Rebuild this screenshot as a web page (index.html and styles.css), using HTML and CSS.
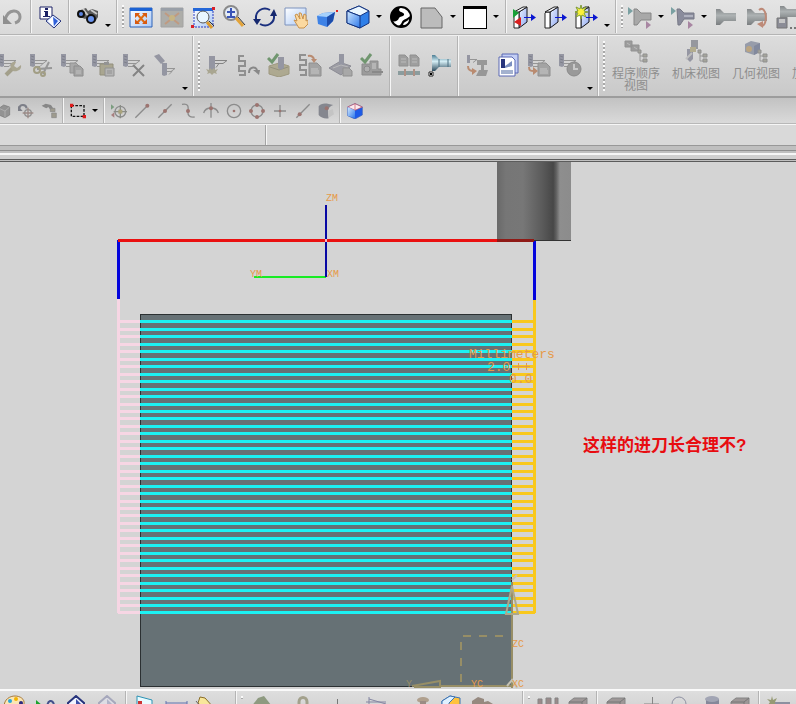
FILE: index.html
```html
<!DOCTYPE html>
<html lang="zh-CN">
<head>
<meta charset="UTF-8">
<meta name="viewport" content="width=device-width, initial-scale=1.0">
<title>刀轨</title>
<link rel="stylesheet" href="styles.css">
</head>
<body>

<!-- 公用图形 -->
<svg class="defs" aria-hidden="true">
  <defs>
    <linearGradient id="blue" x1="0" y1="0" x2="1" y2="1"><stop offset="0" stop-color="#d4eaff"/><stop offset="1" stop-color="#2c78ea"/></linearGradient>
    <linearGradient id="win" x1="0" y1="0" x2="1" y2="1"><stop offset="0" stop-color="#ffffff"/><stop offset="1" stop-color="#a9c8f7"/></linearGradient>
    <linearGradient id="slab" x1="0" y1="0" x2="1" y2="1"><stop offset="0" stop-color="#eef4ff"/><stop offset="1" stop-color="#8fa8f0"/></linearGradient>
    <linearGradient id="steel" x1="0" y1="0" x2="0" y2="1"><stop offset="0" stop-color="#4d7e94"/><stop offset=".4" stop-color="#d5eef5"/><stop offset="1" stop-color="#2e4c5e"/></linearGradient>
    <linearGradient id="grey" x1="0" y1="0" x2="0" y2="1"><stop offset="0" stop-color="#85898b"/><stop offset=".4" stop-color="#adb2b3"/><stop offset="1" stop-color="#7a7e80"/></linearGradient>
    <linearGradient id="tool" x1="0" y1="0" x2="1" y2="0">
      <stop offset="0" stop-color="#696969"/><stop offset=".12" stop-color="#767676"/><stop offset=".35" stop-color="#777777"/>
      <stop offset=".6" stop-color="#5c5c5c"/><stop offset=".76" stop-color="#474747"/><stop offset=".8" stop-color="#606060"/>
      <stop offset=".85" stop-color="#8e8e8e"/><stop offset="1" stop-color="#8c8c8c"/>
    </linearGradient>
    <symbol id="cutter" viewBox="0 0 24 24">
      <path d="M1 1h5v12l-2 1-3-1z" fill="#8a8c9a"/><path d="M2 3l3 1M2 6l3 1M2 9l3 1" stroke="#70727f"/>
      <path d="M6 7.500h12l-4 3M6 10.500h8l-3 3H6" fill="none" stroke="#8b8b8b"/>
    </symbol>
    <symbol id="page" viewBox="0 0 24 24">
      <path d="M11 10h8l4 4v9H11z" fill="#9b9b9b" stroke="#848484"/><path d="M13 16h7M13 18h8M13 20h8" stroke="#c6c6c6"/>
    </symbol>
    <symbol id="tree" viewBox="0 0 24 24">
      <path d="M16 14v8M16 17h3M16 22h3" stroke="#8d8d8d" fill="none"/><path d="M14 11h3v3h-3zM19 15h4v3h-4zM19 20h4v3h-4z" fill="#9d9d92" stroke="#858585"/>
    </symbol>
    <symbol id="holder" viewBox="0 0 24 24">
      <path d="M2 4h4l4 4h12v8H10l-4 4H2z" fill="url(#grey)"/>
    </symbol>
    <symbol id="door" viewBox="0 0 24 24">
      <path d="M6 7l8-5v15l-8 6z" fill="url(#slab)" stroke="#101018"/><path d="M1 8l1-1h4v16H1z" fill="#fff" stroke="#222"/><path d="M1 7l9-5h4L6 7z" fill="#f6f6fa" stroke="#222"/>
      <path d="M11 12h7V9l5 3.500-5 3.500v-3h-7z" fill="#0a16d0"/>
    </symbol>
    <symbol id="gcube" viewBox="0 0 24 24">
      <path d="M3 7l5-4h13v12l-5 5H3z" fill="#9d9797" stroke="#858585"/><path d="M3 7h13v13M16 7l5-4" fill="none" stroke="#777"/>
    </symbol>
  </defs>
</svg>

<header class="bars">

  <!-- 标准 / 视图 / 机床 -->
  <div class="toolbar toolbar-view" role="toolbar">
    <button class="btn" aria-label="撤消"><svg viewBox="0 0 24 24"><path d="M5 15C8 3 20 4 20 12c0 3-2 5-5 6" fill="none" stroke="#959595" stroke-width="3"/><path d="M3 10v9h9z" fill="#8f8f8f"/></svg></button>
    <span class="sep"></span>
    <button class="btn" aria-label="信息"><svg viewBox="0 0 24 24"><path d="M2 2h12v12H2z" fill="#fff" stroke="#1c2266"/><path d="M7 3h3v2H7zM6 6h4v5h2v1H5v-1h2V7H6z" fill="#1c2266"/><path d="M15 10l8 6-7 7-8-7z" fill="#dbe7ff" stroke="#27347c"/><path d="M15 12v9l-5-5z" fill="#fff"/><path d="M15 12l5 4-4 5z" fill="#2f5fd8"/></svg></button>
    <span class="sep"></span>
    <button class="btn" aria-label="查找"><svg viewBox="0 0 24 24"><path d="M2 6l8-3 2 3 4-2 6 2v6l-3 5-5 1-3-5-2 1-5-2z" fill="#5a5a5a"/><path d="M7 4l6 8M15 5l6 4" stroke="#c9c9c9" stroke-width="2"/><circle cx="5" cy="9" r="4" fill="#101010"/><circle cx="5" cy="9" r="2" fill="#5b84e0"/><circle cx="15" cy="14" r="5" fill="#101010"/><circle cx="15" cy="14" r="3" fill="#6b95ee"/></svg></button>
    <button class="drop more" aria-label="更多"></button>
    <span class="sep"></span>
    <span class="grip"></span>
    <button class="btn" aria-label="适合窗口"><svg viewBox="0 0 24 24"><path d="M1 3h22v19H1z" fill="url(#win)" stroke="#2c62b8"/><path d="M1 3h22v3H1z" fill="#1c62d4"/><path d="M8 9l8 9M16 9l-8 9" stroke="#e06a10" stroke-width="2"/><path d="M6 8h5l-5 5zM18 8h-5l5 5zM6 19h5l-5-5zM18 19h-5l5-5z" fill="#d85a12"/></svg></button>
    <button class="btn" aria-label="填充视图"><svg viewBox="0 0 24 24"><path d="M1 3h22v19H1z" fill="#adada9" stroke="#a2a2a2"/><path d="M1 3h22v3H1z" fill="#9aa0a8"/><path d="M5 8l5 4M19 8l-5 4M5 19l5-4M19 19l-5-4" stroke="#c09a80" stroke-width="2"/><circle cx="12" cy="13" r="3" fill="#c7b584"/></svg></button>
    <button class="btn" aria-label="缩放"><svg viewBox="0 0 24 24"><path d="M2 3h20v19H2z" fill="url(#win)"/><path d="M2 3h20v3H2z" fill="#2467d8"/><path d="M3 6v16M4 22h18M22 6v16" stroke="#283ac0" stroke-dasharray="2 1"/><circle cx="12" cy="12" r="6" fill="#e9f6ff" stroke="#555"/><path d="M16 17l5 6" stroke="#dd9b2c" stroke-width="3"/><path d="M18 16l5 5" stroke="#333"/><path d="M0 20h3v3H0zM21 2h3v3h-3z" fill="#d8202a"/></svg></button>
    <button class="btn" aria-label="放大缩小"><svg viewBox="0 0 24 24"><circle cx="9" cy="8" r="7" fill="#e4ecf6" stroke="#8a8a8a" stroke-width="2"/><path d="M5 7h8M9 3v8M5 12h8" stroke="#3a55b8" stroke-width="2"/><path d="M14 13l7 8" stroke="#e2a33a" stroke-width="3"/><path d="M16 12l7 8" stroke="#333"/></svg></button>
    <button class="btn" aria-label="旋转"><svg viewBox="0 0 24 24"><path d="M3 14C2 6 10 1 17 5M21 10c1 8-7 13-14 9" fill="none" stroke="#1a2f7e" stroke-width="2"/><path d="M17 11l4-7 3 7zM0 14l4 6 4-6z" fill="#16286e"/></svg></button>
    <button class="btn" aria-label="平移"><svg viewBox="0 0 24 24"><path d="M1 3h21v17H1z" fill="url(#win)" stroke="#7d92bc"/><path d="M10 15l3 1-2-6 2-1 3 5-1-6h2l2 6 1-5 2 1v6l2-1v4l-4 4h-5z" fill="#fbd9a0" stroke="#c9924c"/></svg></button>
    <button class="btn" aria-label="透视"><svg viewBox="0 0 24 24"><path d="M2 11l6-3 12-1-2 9-6 6-9-3z" fill="#3e82e6"/><path d="M2 11l6-3 12-1-8 5z" fill="#a5d0fb"/><path d="M12 12l8-5-2 9-6 6z" fill="#1c4cab"/><path d="M21 5h2v2h-2z" fill="#d22"/></svg></button>
    <button class="btn" aria-label="带边着色"><svg viewBox="0 0 24 24"><path d="M1 6l12-5 10 5v12l-9 5-13-5z" fill="#2f7fe8" stroke="#12327e"/><path d="M1 6l12-5 10 5-9 5z" fill="#eaf6ff" stroke="#12327e"/><path d="M1 6l13 5v12L1 18z" fill="url(#blue)" stroke="#12327e"/></svg></button>
    <button class="drop" aria-label="着色选项"></button>
    <button class="btn" aria-label="面分析"><svg viewBox="0 0 24 24"><circle cx="12" cy="12" r="10" fill="#fff" stroke="#000" stroke-width="2"/><path d="M13 2C5 1 0 9 3 16c3 1 6 0 7-3 1-2 4-1 5-3 1-3-4-2-5-5 0-2 2-3 3-3z" fill="#000"/><path d="M8 21c3 0 4-2 5-4 1-3 6-3 9-7 1 7-4 13-9 12z" fill="#000"/><path d="M14 20c1-4 4-3 6-6 0 4-3 6-6 6z" fill="#fff"/></svg></button>
    <button class="btn" aria-label="剖切"><svg viewBox="0 0 24 24"><path d="M1 3h14l7 9v11H1z" fill="#bcbcbc" stroke="#666"/></svg></button>
    <button class="drop" aria-label="剖切选项"></button>
    <button class="btn" aria-label="背景色"><svg viewBox="0 0 24 24"><path d="M0 1h24v23H0z" fill="#000"/><path d="M1 4h22v19H1z" fill="#fff"/></svg></button>
    <button class="drop" aria-label="背景色选项"></button>
    <span class="sep"></span>
    <button class="btn" aria-label="显示隐藏"><svg viewBox="0 0 24 24"><use href="#door"/><path d="M0 4l6 4-6 5z" fill="#18a038"/><path d="M8 12v9l-7-4z" fill="#d81f1f"/></svg></button>
    <button class="btn" aria-label="隐藏"><svg viewBox="0 0 24 24"><use href="#door"/></svg></button>
    <button class="btn" aria-label="新建显示"><svg viewBox="0 0 24 24"><use href="#door"/><path d="M6 0l1 4 4-2-2 4 4 1-4 1 2 4-4-2-1 4-1-4-4 2 2-4-4-1 4-1-2-4 4 2z" fill="#fbf23a" stroke="#7d9a3a"/></svg></button>
    <button class="drop more" aria-label="更多"></button>
    <span class="sep"></span>
    <span class="grip"></span>
    <button class="btn" aria-label="创建刀具"><svg viewBox="0 0 24 24"><path d="M0 2l5 4-5 4z" fill="#7aa0a2"/><path d="M6 4h3l4 4h10v7H13l-4 5H6z" fill="#a8a8a8" stroke="#868686"/><path d="M18 16l5 4-5 4z" fill="#a886a2"/></svg></button>
    <button class="drop" aria-label="刀具选项"></button>
    <button class="btn" aria-label="创建刀柄"><svg viewBox="0 0 24 24"><path d="M0 2l5 4-5 4z" fill="#7aa0a2"/><path d="M6 4h3l4 4h10v6H13l-4 6H7z" fill="#8a8c9c" stroke="#777986"/><path d="M13 11h9" stroke="#b0b2bf" stroke-width="2"/><path d="M17 16l5 4-5 4z" fill="#a886a2"/></svg></button>
    <button class="drop" aria-label="刀柄选项"></button>
    <button class="btn" aria-label="刀柄"><svg viewBox="0 0 24 24"><use href="#holder"/></svg></button>
    <button class="btn" aria-label="旋转刀柄"><svg viewBox="0 0 24 24"><use href="#holder"/><path d="M14 5c8-6 9 15 3 16" fill="none" stroke="#bd8a78" stroke-width="2"/><path d="M12 19l6-3v7z" fill="#bd8a78"/></svg></button>
    <button class="btn" aria-label="保存刀柄"><svg viewBox="0 0 24 24"><path d="M4 1h4l3 3h13v8H12l-3 3H4z" fill="url(#grey)"/><path d="M1 13h10v10H1z" fill="#8b8c96" stroke="#777"/><path d="M3 14h6v4H3z" fill="#c6c6c6"/><path d="M14 22h2v2h-2zM18 22h2v2h-2z" fill="#777"/></svg></button>
  </div>

  <!-- 操作 / 视图切换 -->
  <div class="toolbar toolbar-operation" role="toolbar">
    <button class="btn off" aria-label="编辑"><svg viewBox="0 0 24 24"><use href="#cutter"/><path d="M8 22l7-7" stroke="#9b977f" stroke-width="4"/><path d="M13 15c-2-5 3-7 5-6l-2 4 3 2 4-3c1 5-4 7-8 6z" fill="#a39f86"/></svg></button>
    <button class="btn off" aria-label="剪切"><svg viewBox="0 0 24 24"><use href="#cutter"/><path d="M20 9l-6 12M8 16l15-1" stroke="#8d8d8d" stroke-width="2"/><circle cx="8" cy="17" r="3" fill="none" stroke="#9a9678" stroke-width="2"/><circle cx="14" cy="21" r="2" fill="none" stroke="#9a9678" stroke-width="2"/></svg></button>
    <button class="btn off" aria-label="复制"><svg viewBox="0 0 24 24"><use href="#cutter"/><path d="M10 10h6l3 3v7h-9z" fill="#a2a2a2" stroke="#888"/><path d="M14 13h6l3 3v7h-9z" fill="#9d9d9d" stroke="#828282"/><path d="M16 18h5M16 20h5" stroke="#bdbdbd"/></svg></button>
    <button class="btn off" aria-label="粘贴"><svg viewBox="0 0 24 24"><use href="#cutter"/><path d="M9 11h13v11H9z" fill="#a39f86" stroke="#88856f"/><path d="M13 9h5v3h-5z" fill="#888"/><path d="M14 15h9v8h-9z" fill="#b0b0b0" stroke="#888"/><path d="M16 18h5M16 20h5" stroke="#888"/></svg></button>
    <button class="btn off" aria-label="删除"><svg viewBox="0 0 24 24"><use href="#cutter"/><path d="M11 12l11 11M22 12L11 23" stroke="#777" stroke-width="2"/></svg></button>
    <button class="btn off" aria-label="变换"><svg viewBox="0 0 24 24"><path d="M1 3l5-2 6 7-4 3z" fill="#8a8c9a"/><path d="M9 10h5v12l-3 1-2-1z" fill="#8a8c9a"/><path d="M14 15.500h8l-4 3M14 18.500h5l-3 3" fill="none" stroke="#8b8b8b"/></svg></button>
    <button class="drop more" aria-label="更多"></button>
    <span class="sep"></span>
    <span class="grip"></span>
    <button class="btn off" aria-label="生成刀轨"><svg viewBox="0 0 24 24"><path d="M4 3h6v14H4z" fill="#8a8c9a"/><path d="M10 7.500h12l-4 3h-8M18 10.500h-4l-3 4" fill="none" stroke="#777"/><path d="M1 16l3 1 1-2 2 2 2-2 1 2 3-1-2 3 1 2-3-1-2 2-2-2-3 1 1-2z" fill="#a39f86"/></svg></button>
    <button class="btn off" aria-label="重播刀轨"><svg viewBox="0 0 24 24"><path d="M8 3H3v5h6v5H3v5h6v4H3" fill="none" stroke="#858585" stroke-width="2"/><path d="M13 20c0-7 8-7 8-2" fill="none" stroke="#7c7c7c" stroke-width="2"/><path d="M17 17h7l-1 5z" fill="#7c7c7c"/></svg></button>
    <button class="btn off" aria-label="确认刀轨"><svg viewBox="0 0 24 24"><path d="M2 13l10-3 10 3v8l-10 3-10-3z" fill="#a8a386" stroke="#958f72"/><path d="M3 14l9 3 9-3" fill="none" stroke="#88856f"/><path d="M11 4h6v11l-3 2-3-2z" fill="#8a8c9a"/><path d="M1 5l4 4 6-8" fill="none" stroke="#5f8c5e" stroke-width="3"/></svg></button>
    <button class="btn off" aria-label="列出刀轨"><svg viewBox="0 0 24 24"><use href="#page"/><path d="M8 2H2v5h6v5H2v5h6v5H2" fill="none" stroke="#858585" stroke-width="2"/><path d="M10 3c4-1 6 2 6 4" fill="none" stroke="#b57f60" stroke-width="2"/><path d="M13 6h6l-3 4z" fill="#b57f60"/></svg></button>
    <button class="btn off" aria-label="后处理"><svg viewBox="0 0 24 24"><path d="M0 15l10-6 12 4-10 9z" fill="#93939c" stroke="#80808a"/><path d="M10 1h5v12h-5z" fill="#8a8c9a"/><path d="M4 15l8-3 7 2" stroke="#b5b5b5" fill="none"/><path d="M14 15h6l3 3v5h-9z" fill="#a2a2a2" stroke="#858585"/></svg></button>
    <button class="btn off" aria-label="机床仿真"><svg viewBox="0 0 24 24"><path d="M2 11h8V8h8v8h3v6H2z" fill="#939393" stroke="#818181"/><path d="M12 10h4v6h-4z" fill="#b0b0b0"/><circle cx="7" cy="16" r="3" fill="#aaa" stroke="#7d7d7d"/><path d="M12 19h11" stroke="#7d7d7d" stroke-width="2"/><path d="M1 5l4 4 6-8" fill="none" stroke="#5f8c5e" stroke-width="3"/></svg></button>
    <span class="sep"></span>
    <button class="btn off" aria-label="车间文档"><svg viewBox="0 0 24 24"><path d="M2 2h6l3 3v8H2zM13 2h6l3 3v8h-9z" fill="#959595" stroke="#858585"/><path d="M4 6h5M4 9h5M15 6h5M15 9h5" stroke="#b8b8b8"/><path d="M1 18h22v4H1z" fill="#7f9496"/><path d="M8 16v7M17 16v7" stroke="#a88678" stroke-width="2"/></svg></button>
    <button class="btn" aria-label="刀具"><svg viewBox="0 0 24 24"><path d="M4 2h3l4 4h12v8H11l-4 4H4z" fill="url(#steel)"/><path d="M11 6v8M20 6v8" stroke="#4a6e80"/><path d="M1 19h4v4H1z" fill="#fff" stroke="#222"/><path d="M2 20h2v2H2z" fill="#000"/></svg></button>
    <span class="sep"></span>
    <button class="btn off" aria-label="机床"><svg viewBox="0 0 24 24"><path d="M2 2h3v8H2z" fill="#8a8c9a"/><path d="M5 6.500h7l-4 3" fill="none" stroke="#8a8a8a"/><path d="M3 13c0 4 2 5 6 5" fill="none" stroke="#b57f60" stroke-width="2"/><path d="M7 15l5 3-5 4z" fill="#b57f60"/><path d="M12 7h10v5h-3v5h4l-2 6H11l3-6h2v-5h-4z" fill="#8e8e8e"/></svg></button>
    <button class="btn" aria-label="车间文档输出"><svg viewBox="0 0 24 24"><path d="M6 1h16v19H6z" fill="#c3cef4" stroke="#5a68b4"/><path d="M3 4h13l3 3v16H3z" fill="#fff" stroke="#5a68b4"/><path d="M5 6h4v9H5z" fill="#27347c"/><path d="M9 13l7-5v5l-7 2z" fill="#7b8fc0"/><path d="M5 18h12M5 20h12" stroke="#49659e"/></svg></button>
    <button class="btn off" aria-label="输出刀位"><svg viewBox="0 0 24 24"><use href="#cutter"/><use href="#page"/><path d="M2 14c0 4 2 4 5 4" fill="none" stroke="#b57f60" stroke-width="2"/><path d="M6 14l5 4-5 4z" fill="#b57f60"/></svg></button>
    <button class="btn off" aria-label="加工时间"><svg viewBox="0 0 24 24"><use href="#cutter"/><circle cx="16" cy="16" r="7" fill="#909090" stroke="#7e7e7e"/><path d="M16 11v5h4" fill="none" stroke="#c8c8c8" stroke-width="2"/></svg></button>
    <button class="drop more" aria-label="更多"></button>
    <span class="sep"></span>
    <span class="grip"></span>
    <button class="btn-label"><svg viewBox="0 0 24 24"><path d="M1 2h7v6H1zM7 6h8v6H7z" fill="#929292" stroke="#868686"/><path d="M3 4l3 2M10 8l3 2" stroke="#b5b5b5"/><use href="#tree"/></svg>程序顺序<br>视图</button>
    <button class="btn-label"><svg viewBox="0 0 24 24"><path d="M7 1h7v9H7z" fill="#8b8d94"/><path d="M3 10h6v10l-3 3-3-3z" fill="#8a8c9a"/><path d="M2 20l6-6" stroke="#bcbcbc" stroke-width="2"/><path d="M6 8h6v5H6z" fill="#ada684"/><use href="#tree"/></svg>机床视图</button>
    <button class="btn-label"><svg viewBox="0 0 24 24"><path d="M1 5l6-3 9 2v9l-6 3-9-3z" fill="#8c92a2"/><path d="M10 7l6-3v9l-6 3z" fill="#747c94"/><circle cx="5" cy="10" r="3" fill="#b79d72"/><use href="#tree"/></svg>几何视图</button>
    <button class="btn-label"><svg viewBox="0 0 24 24"><use href="#tree"/></svg>加工方法</button>
  </div>

  <!-- 选择 / 捕捉点 -->
  <div class="toolbar toolbar-snap" role="toolbar">
    <button class="btn" aria-label="选择实体"><svg viewBox="0 0 24 24"><path d="M6 8l7-5 9 3v12l-7 4-9-4z" fill="#939393" stroke="#777"/><path d="M6 8l9 4v10M15 12l7-6" fill="none" stroke="#bbb"/></svg></button>
    <button class="btn" aria-label="重定向"><svg viewBox="0 0 24 24"><path d="M2 8c1-7 10-6 11 0" fill="none" stroke="#7d7f88" stroke-width="3"/><path d="M0 4v8h7z" fill="#7d7f88"/><circle cx="15" cy="15" r="5" fill="none" stroke="#8f8f8f" stroke-width="2"/><path d="M15 7v16M7 15h16" stroke="#9c8a86" stroke-width="2"/></svg></button>
    <button class="btn" aria-label="选择链"><svg viewBox="0 0 24 24"><path d="M1 4l6-3 8 2 4 6-5 1-3-4-3 2-4-2z" fill="#878787"/><path d="M14 8h7v5h-7zM16 15h7v7h-7z" fill="#9e9b8e" stroke="#888"/></svg></button>
    <span class="sep"></span>
    <button class="btn" aria-label="矩形选择"><svg viewBox="0 0 24 24"><path d="M2 4h19v16H2z" fill="none" stroke="#111" stroke-width="2" stroke-dasharray="4 2"/><path d="M0 1h5v5H0zM19 18h5v5h-5z" fill="#e01c1c"/></svg></button>
    <button class="drop" aria-label="选择方式"></button>
    <span class="sep"></span>
    <button class="btn" aria-label="启用捕捉点"><svg viewBox="0 0 24 24"><circle cx="14" cy="13" r="8" fill="none" stroke="#8b8b8b" stroke-width="2"/><path d="M14 3v20M4 13h20" stroke="#8a8d86" stroke-width="2"/><path d="M11 10h6v6h-6z" fill="#a9a37c"/><path d="M0 2l5 4-5 4z" fill="#7c9d80"/><path d="M5 14v8l-5-4z" fill="#a88080"/></svg></button>
    <button class="btn" aria-label="端点"><svg viewBox="0 0 24 24"><path d="M2 22L20 4" stroke="#8c8c8c" stroke-width="2"/><circle cx="20" cy="4" r="3" fill="#9c7470"/></svg></button>
    <button class="btn" aria-label="中点"><svg viewBox="0 0 24 24"><path d="M2 22L22 2" stroke="#8c8c8c" stroke-width="2"/><circle cx="12" cy="12" r="3" fill="#9c7470"/></svg></button>
    <button class="btn" aria-label="控制点"><svg viewBox="0 0 24 24"><path d="M3 2c9-2 10 3 9 10s3 10 10 9" fill="none" stroke="#8c8c8c" stroke-width="2"/><circle cx="12" cy="12" r="3" fill="#9c7470"/></svg></button>
    <button class="btn" aria-label="交点"><svg viewBox="0 0 24 24"><path d="M12 0v22M1 15C4 5 20 5 23 15" fill="none" stroke="#8c8c8c" stroke-width="2"/><circle cx="12" cy="8" r="3" fill="#9c7470"/></svg></button>
    <button class="btn" aria-label="圆心"><svg viewBox="0 0 24 24"><circle cx="12" cy="12" r="10" fill="none" stroke="#8c8c8c" stroke-width="2"/><circle cx="12" cy="12" r="2" fill="#9c7470"/></svg></button>
    <button class="btn" aria-label="象限点"><svg viewBox="0 0 24 24"><circle cx="12" cy="12" r="9" fill="none" stroke="#8c8c8c" stroke-width="2"/><g fill="#9c7470"><circle cx="12" cy="3" r="3"/><circle cx="12" cy="21" r="3"/><circle cx="3" cy="12" r="3"/><circle cx="21" cy="12" r="3"/></g></svg></button>
    <button class="btn" aria-label="现有点"><svg viewBox="0 0 24 24"><path d="M12 3v18M3 12h18" stroke="#8c8c8c" stroke-width="2"/><circle cx="12" cy="12" r="2" fill="#9c7470"/></svg></button>
    <button class="btn" aria-label="曲线上的点"><svg viewBox="0 0 24 24"><path d="M2 22L22 2" stroke="#8c8c8c" stroke-width="2"/><circle cx="7" cy="17" r="3" fill="#9c7470"/></svg></button>
    <button class="btn" aria-label="面上的点"><svg viewBox="0 0 24 24"><path d="M1 5c4-6 12-5 22-2-6 2-8 6-8 10l1 10C10 24 4 22 1 18z" fill="#85878f"/><path d="M15 12l7-3 2 8-8 5z" fill="#c4c4c4"/><circle cx="13" cy="8" r="3" fill="#9c7470"/></svg></button>
    <span class="sep"></span>
    <button class="btn" aria-label="工作视图"><svg viewBox="0 0 24 24"><path d="M1 6l11-5 11 5v12l-11 6-11-5z" fill="#1d5be8" stroke="#3e62b8"/><path d="M1 6l11-5 11 5-11 5z" fill="#fbe9ee" stroke="#c24a5c"/><path d="M1 6l11 5v12L1 19z" fill="url(#blue)"/><path d="M12 1v10" stroke="#c24a5c"/></svg></button>
  </div>

  <!-- 提示行 -->
  <div class="prompt">
    <div class="prompt-cue"></div>
    <div class="prompt-status"></div>
  </div>
  <div class="frame-strip"></div>
  <div class="frame-edge"></div>
</header>

<main class="viewport">
  <svg class="scene" viewBox="0 0 796 527" preserveAspectRatio="xMinYMin slice" shape-rendering="crispEdges">
    <!-- 工件 -->
    <rect x="140" y="152" width="372" height="373" fill="#667175"/>
    <path d="M140.500 524.500v-372h371v372z" fill="none" stroke="#2b3032"/>

    <!-- 刀具 -->
    <rect x="497" y="0" width="74" height="78" fill="url(#tool)"/>
    <path d="M534 78.500h37" stroke="#333"/>

    <!-- 刀轨 -->
    <path id="lead-in" fill="none" stroke="#f7d6e4" stroke-width="3"/>
    <path id="cut" fill="none" stroke="#1cf1f3" stroke-width="3"/>
    <path id="lead-out" fill="none" stroke="#f9c81c" stroke-width="3"/>
    <path d="M118.500 137v314" stroke="#f7d6e4" stroke-width="3"/>
    <path d="M534.500 138v313" stroke="#f9c81c" stroke-width="3"/>
    <path d="M118.500 78v59M534.500 79v59" stroke="#0404dc" stroke-width="3"/>
    <path d="M118 78.500h379" stroke="#ea1010" stroke-width="3"/>
    <path d="M497 78.500h37" stroke="#8f1a16" stroke-width="3"/>

    <!-- 加工坐标系 -->
    <path d="M254 115h72" stroke="#18ec24" stroke-width="2"/>
    <path d="M326 43v72" stroke="#0808a4" stroke-width="2"/>
    <path d="M325 78.500h2" stroke="#f6b6c4" stroke-width="3"/>
    <text class="axis" x="326" y="39">ZM</text>
    <text class="axis" x="250" y="115">YM</text>
    <text class="axis" x="327" y="115">XM</text>

    <!-- 单位标注 -->
    <text class="dim" x="469" y="196">Millimeters</text>
    <text class="dim" x="487" y="209">2.0</text>
    <path d="M512 204.500h18M518.500 201v7M526.500 201v7" stroke="#e09a50" fill="none"/>
    <text class="dim" x="509" y="221">0.0</text>

    <!-- 工作坐标系 -->
    <g fill="none" stroke="#978e66" stroke-width="2" shape-rendering="auto">
      <path d="M461 520V474h51" stroke-dasharray="8 8"/>
      <path d="M512 420v106M440 524h72"/>
      <path d="M512 424l-6 28h12z" stroke="#aea88a"/>
      <path d="M412 524l28-5v6h-26"/>
      <path d="M512 418l5-5M507 524l5-6 5 8" stroke="#c5c2b4"/>
    </g>
    <text class="axis" x="512" y="485">ZC</text>
    <text class="axis" x="471" y="525">YC</text>
    <text class="axis" x="512" y="525">XC</text>
    <text class="axis axis-dim" x="406" y="525">Y</text>

    <text class="question" x="583" y="289">这样的进刀长合理不?</text>
  </svg>
</main>

<!-- 底部工具条 -->
<footer class="toolbar toolbar-bottom" role="toolbar">
  <button class="btn" aria-label="对象显示"><svg viewBox="0 0 24 24"><path d="M2 12C2 4 8 1 13 1s10 3 9 8-6 3-7 6 2 6-4 6S2 18 2 12z" fill="#fbe6b4" stroke="#a87a3c"/><circle cx="8" cy="6" r="2" fill="#2aa5d8"/><circle cx="14" cy="4" r="2" fill="#f4b400"/><circle cx="19" cy="8" r="2" fill="#2b2b80"/><circle cx="7" cy="11" r="2" fill="#d22"/></svg></button>
  <button class="btn" aria-label="变换对象"><svg viewBox="0 0 24 24"><path d="M3 5l7 6-7 5z" fill="#1ba32c"/><path d="M14 14c0-10 6-10 7-4v8" fill="none" stroke="#44508c" stroke-width="2"/></svg></button>
  <button class="btn" aria-label="图层"><svg viewBox="0 0 24 24"><path d="M12 1l8 7v4l-8 7-8-7V8z" fill="#f2f5ff" stroke="#27347c" stroke-width="2"/><path d="M12 4l5 5v7h-5z" fill="#3d50a8"/></svg></button>
  <button class="btn" aria-label="图层视图"><svg viewBox="0 0 24 24"><path d="M12 1l8 7v4l-8 7-8-7V8z" fill="#dddde4" stroke="#a6a8bc" stroke-width="2"/><path d="M12 4l5 5v7h-5z" fill="#b1b3c8"/></svg></button>
  <span class="sep"></span>
  <button class="btn" aria-label="平面"><svg viewBox="0 0 24 24"><path d="M4 1l15 4v16L4 22z" fill="#e9fbff" stroke="#2b92b4"/><path d="M5 6h4v5H5z" fill="#c33"/></svg></button>
  <button class="btn" aria-label="测量距离"><svg viewBox="0 0 24 24"><path d="M2 6v12M23 6v12M2 8h21" stroke="#6272b0" stroke-width="1"/><path d="M3 12h19v6H3z" fill="#f0d47a"/></svg></button>
  <button class="btn" aria-label="测量角度"><svg viewBox="0 0 24 24"><path d="M5 2l5 1 9 10-5 5L3 8z" fill="#f8e79a" stroke="#8a6d28"/><path d="M1 6l4 5" stroke="#666"/></svg></button>
  <button class="drop more" aria-label="更多"></button>
  <span class="sep"></span>
  <span class="grip"></span>
  <button class="btn" aria-label="创建程序"><svg viewBox="0 0 24 24"><path d="M3 12l7-9 6-2 7 9-3 6z" fill="#8e9a80"/><path d="M6 9h6v6H6z" fill="#a8887c"/></svg></button>
  <button class="drop" aria-label="程序选项"></button>
  <button class="btn" aria-label="创建几何体"><svg viewBox="0 0 24 24"><path d="M8 16V7c0-6 8-6 8 0v9" fill="none" stroke="#a3a18c" stroke-width="3"/></svg></button>
  <button class="btn" aria-label="点"><svg viewBox="0 0 24 24"><path d="M15.500 4v18M6 13.500h18" stroke="#777"/></svg></button>
  <button class="drop" aria-label="点选项"></button>
  <button class="btn" aria-label="草图"><svg viewBox="0 0 24 24"><path d="M4 2v20M4 4l17 5M1 7h20" stroke="#8486a2" stroke-width="1"/></svg></button>
  <button class="drop" aria-label="草图选项"></button>
  <button class="btn" aria-label="拉伸"><svg viewBox="0 0 24 24"><ellipse cx="15" cy="5" rx="6" ry="3" fill="#b0a08e"/><path d="M12 6h6v12h-6z" fill="#9a8c84"/></svg></button>
  <button class="btn" aria-label="长方体"><svg viewBox="0 0 24 24"><path d="M3 6l8-5 10 2v14l-8 4-10-3z" fill="#ffc23c" stroke="#3b72b4"/><path d="M3 6l8-5 5 1-6 6v12l-7-2z" fill="#dff1ff" stroke="#3b72b4"/></svg></button>
  <button class="btn" aria-label="求和"><svg viewBox="0 0 24 24"><path d="M2 6l6-4 6 2v3l4-1 5 3v8l-8 3-13-4z" fill="#96897f"/></svg></button>
  <button class="drop" aria-label="布尔选项"></button>
  <button class="drop more" aria-label="更多"></button>
  <span class="sep"></span>
  <span class="grip"></span>
  <button class="btn" aria-label="腔体"><svg viewBox="0 0 24 24"><path d="M3 4h4v9h4V3h5v9h4V3h3v18H3z" fill="#9a8a8a" stroke="#858585"/></svg></button>
  <button class="btn" aria-label="凸台"><svg viewBox="0 0 24 24"><use href="#gcube"/></svg></button>
  <span class="sep"></span>
  <button class="btn" aria-label="抽壳"><svg viewBox="0 0 24 24"><use href="#gcube"/><path d="M6 10h7v8H6z" fill="#a88484"/></svg></button>
  <button class="btn" aria-label="基准点"><svg viewBox="0 0 24 24"><path d="M17.500 2v18M9 9h16" stroke="#858585" stroke-width="1"/></svg></button>
  <button class="btn" aria-label="圆"><svg viewBox="0 0 24 24"><circle cx="13" cy="9" r="7" fill="none" stroke="#8e90a2"/></svg></button>
  <button class="btn" aria-label="圆柱"><svg viewBox="0 0 24 24"><path d="M9 4v16h13V4z" fill="#85889a"/><ellipse cx="15" cy="4" rx="7" ry="3" fill="#a2a5b4"/></svg></button>
  <button class="btn" aria-label="块"><svg viewBox="0 0 24 24"><use href="#gcube"/></svg></button>
  <span class="sep"></span>
  <button class="btn" aria-label="新建"><svg viewBox="0 0 24 24"><path d="M6 1l1 4 4-2-2 4 4 1-4 2H2l2-3-3-3 4 1z" fill="#969a74"/><path d="M9 7h15v12H9z" fill="#8c90a0"/></svg></button>
</footer>

<script>
// 往复切削：每层一条水平线
const PASSES = 40;
const TOP = 159;
const DEPTH = 291;

function passes(from, to) {
  let d = '';
  for (let i = 0; i < PASSES; i++) {
    const y = TOP + Math.ceil(i * DEPTH / (PASSES - 1)) + 0.5;
    d += 'M' + from + ' ' + y + 'H' + to;
  }
  return d;
}

document.getElementById('lead-in').setAttribute('d', passes(118, 140));
document.getElementById('cut').setAttribute('d', passes(140, 512));
document.getElementById('lead-out').setAttribute('d', passes(512, 535));
</script>

</body>
</html>
```
FILE: styles.css
```css
body {
  margin: 0;
  height: 100vh;
  display: flex;
  flex-direction: column;
  overflow: hidden;
  background: #d4d4d4;
  font-family: "Liberation Sans", "Noto Sans CJK SC", sans-serif;
  font-size: 12px;
}
.defs { position: absolute; width: 0; height: 0; }
.bars { flex: none; }

/* 工具条 */
.toolbar { display: flex; overflow: hidden; box-sizing: border-box; }
.toolbar-view {
  height: 35px;
  padding-bottom: 1px;
  border-bottom: 1px solid #b4b4b4;
  background: linear-gradient(#e4e4e4, #d9d9d9);
}
.toolbar-operation {
  height: 61px;
  border-top: 1px solid #f0f0f0;
  background: linear-gradient(#dcdcdc, #c9c9c9);
}
.toolbar-snap {
  height: 28px;
  border-top: 2px solid #9c9c9c;
  border-bottom: 1px solid #b8b8b8;
  background: linear-gradient(#c2c2c2, #dadada);
}
.toolbar-bottom {
  flex: none;
  height: 15px;
  border-top: 2px solid #fafafa;
  background: linear-gradient(#dedede, #d6d6d6);
}

button {
  flex: none;
  margin: 0;
  padding: 0;
  border: 0;
  background: none;
  font: inherit;
  color: #8e8e8e;
}
.btn { width: 31px; display: flex; align-items: center; justify-content: center; }
.btn svg { width: 24px; height: 24px; flex: none; }
.off svg, .btn-label svg { opacity: .85; }

/* 左端的按钮被窗口边缘遮住一部分 */
.toolbar-view .btn:first-child { margin-left: -4px; }
.toolbar-operation .btn:first-child { margin-left: -6px; }
.toolbar-snap .btn:first-child { margin-left: -9px; }
.toolbar-bottom .btn:first-child { margin-left: -2px; }

.toolbar-operation .btn { padding-bottom: 2px; }
.toolbar-snap .btn { width: 23px; }
.toolbar-snap .btn svg { width: 16px; height: 16px; }
.toolbar-bottom .btn { align-items: flex-start; padding-top: 4px; height: 28px; }

.btn-label {
  width: 60px;
  padding-top: 3px;
  display: block;
  line-height: 12px;
  text-align: center;
  align-self: flex-start;
  white-space: nowrap;
}
.btn-label svg { display: block; width: 24px; height: 24px; margin: 0 auto 5px; }

.drop { width: 12px; display: flex; align-items: center; justify-content: center; }
.drop::before {
  content: "";
  border: 3px solid transparent;
  border-top-color: #000;
  border-bottom: 0;
}
.more { width: 10px; align-items: flex-end; padding-bottom: 6px; }
.toolbar-bottom .drop { visibility: hidden; }

.sep { flex: none; width: 7px; display: flex; justify-content: center; }
.sep::before { content: ""; border-left: 1px solid #b4b4b4; border-right: 1px solid #f6f6f6; }
.toolbar-operation .sep, .toolbar-snap .sep { width: 6px; }

.grip {
  flex: none;
  width: 5px;
  margin: 5px 0;
  background: repeating-linear-gradient(#fafafa 0 2px, #a8a8a8 2px 4px) center / 2px 100% no-repeat;
}

/* 提示行和窗口边框 */
.prompt { display: flex; height: 20px; border-top: 1px solid #f6f6f6; background: #d9d9d9; }
.prompt-cue { flex: 1; border-right: 1px solid #a4a4a4; }
.prompt-status { flex: 2; border-left: 1px solid #f6f6f6; }
.frame-strip { height: 4px; border-top: 1px solid #989898; border-bottom: 1px solid #8f8f8f; background: #bfbfbf; }
.frame-edge {
  height: 8px;
  border-bottom: 3px double #5c5c5c;
  background: linear-gradient(#c0c0c0 2px, #f6f6f6 2px 4px, #d0d0d0 4px);
}

/* 图形窗口 */
.viewport { flex: 1; min-height: 0; overflow: hidden; background: #d4d4d4; }
.scene { display: block; width: 100%; height: 100%; }
.axis { font: 10px "Liberation Mono", monospace; fill: #e69a48; }
.axis-dim { fill: #978e66; }
.dim { font: 13px "Liberation Mono", monospace; fill: #e69a48; }
.question { font: bold 17px "Liberation Sans", "Noto Sans CJK SC", sans-serif; fill: #e80c10; }
```
